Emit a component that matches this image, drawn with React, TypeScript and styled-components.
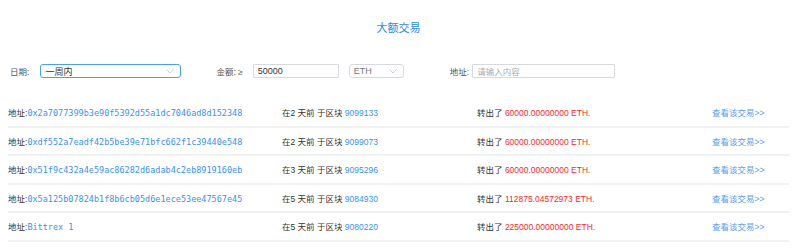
import styled, { createGlobalStyle } from 'styled-components'

const GlobalStyle = createGlobalStyle`
	body {
		margin: 0;
		background: #fff;
		font-family: "Liberation Sans", "Noto Sans CJK SC", sans-serif;
	}
`

const Page = styled.main`
	padding: 20px 11px 0 8px;
`

const Title = styled.h1`
	margin: 0;
	text-align: center;
	font-size: 11px;
	line-height: 16px;
	font-weight: 400;
	color: #2b8ae0;
`

const FilterBar = styled.div`
	display: flex;
	align-items: center;
	height: 14px;
	margin-top: 28px;
	padding-left: 2px;
`

const Label = styled.span<{ $ml?: number }>`
	font-size: 8.5px;
	color: #555;
	margin-left: ${(p) => p.$ml ?? 0}px;
	white-space: nowrap;
`

const Control = styled.div<{ $w: number; $ml: number; $focus?: boolean; $round?: number }>`
	box-sizing: border-box;
	display: flex;
	align-items: center;
	justify-content: space-between;
	width: ${(p) => p.$w}px;
	height: 14px;
	margin-left: ${(p) => p.$ml}px;
	padding: 0 6px 0 4px;
	border: 1px solid ${(p) => (p.$focus ? '#4a9ef5' : '#d6d9de')};
	border-radius: ${(p) => p.$round ?? 3}px;
	font-size: 9px;
	color: #333;
`

const Placeholder = styled.span`
	color: #a8abb2;
	font-size: 8.5px;
`

const Muted = styled.span`
	color: #777;
`

const Chevron = () => (
	<svg width="8" height="5" viewBox="0 0 8 5">
		<polyline points="0.5,0.5 4,4 7.5,0.5" fill="none" stroke="#c0c4cc" strokeWidth="0.8" />
	</svg>
)

const List = styled.div`
	margin-top: 21px;
`

const Row = styled.div`
	display: grid;
	grid-template-columns: 274px 195px 235px 1fr;
	align-items: center;
	height: 26.5px;
	border-bottom: 2px solid #f0f1f3;
	font-size: 8.5px;
	color: #333;
`

const Addr = styled.span`
	font-family: "DejaVu Sans Mono", monospace;
	color: #3d8ff0;
`

const Blue = styled.span`
	color: #3d8ff0;
`

const Red = styled.span`
	color: #f52a2a;
`

const Link = styled.a`
	color: #5a9cf2;
	text-decoration: none;
`

const rows = [
	{ addr: '0x2a7077399b3e90f5392d55a1dc7046ad8d152348', days: 2, block: '9099133', amount: '60000.00000000' },
	{ addr: '0xdf552a7eadf42b5be39e71bfc662f1c39440e548', days: 2, block: '9099073', amount: '60000.00000000' },
	{ addr: '0x51f9c432a4e59ac86282d6adab4c2eb8919160eb', days: 3, block: '9095296', amount: '60000.00000000' },
	{ addr: '0x5a125b07824b1f8b6cb05d6e1ece53ee47567e45', days: 5, block: '9084930', amount: '112875.04572973' },
	{ addr: 'Bittrex 1', days: 5, block: '9080220', amount: '225000.00000000' },
]

const App = () => (
	<Page>
		<GlobalStyle />
		<Title>大额交易</Title>
		<FilterBar>
			<Label>日期:</Label>
			<Control $w={141} $ml={11} $focus>
				<span>一周内</span>
				<Chevron />
			</Control>
			<Label $ml={35}>金额: ≥</Label>
			<Control $w={86} $ml={10} $round={1}>
				<span>50000</span>
			</Control>
			<Control $w={55} $ml={10}>
				<Muted>ETH</Muted>
				<Chevron />
			</Control>
			<Label $ml={46}>地址:</Label>
			<Control $w={143} $ml={3} $round={1}>
				<Placeholder>请输入内容</Placeholder>
			</Control>
		</FilterBar>
		<List>
			{rows.map((r) => (
				<Row key={r.addr}>
					<span>
						地址:<Addr>{r.addr}</Addr>
					</span>
					<span>
						在{r.days} 天前 于区块 <Blue>{r.block}</Blue>
					</span>
					<span>
						转出了 <Red>{r.amount} ETH.</Red>
					</span>
					<Link href="#">查看该交易&gt;&gt;</Link>
				</Row>
			))}
		</List>
	</Page>
)

export default App
